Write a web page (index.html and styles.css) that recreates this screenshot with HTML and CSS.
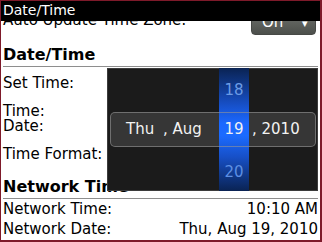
FILE: index.html
```html
<!DOCTYPE html>
<html lang="en">
<head>
    <meta charset="UTF-8">
    <title>Date/Time</title>
    <link rel="stylesheet" href="styles.css">
</head>
<body>
    <div class="screen">
        <div class="list">
            <div class="row-top">
                <span class="label">Auto Update Time Zone:</span>
                <div class="dropdown">On <span class="caret">▾</span></div>
            </div>

            <div class="heading">Date/Time</div>
            <div class="set-time">Set Time:</div>
            <div class="time-date">
                <div>Time:</div>
                <div>Date:</div>
            </div>
            <div class="format">Time Format:</div>

            <div class="heading network">Network Time</div>
            <div class="info-row">
                <span>Network Time:</span>
                <span>10:10 AM</span>
            </div>
            <div class="info-row">
                <span>Network Date:</span>
                <span>Thu, Aug 19, 2010</span>
            </div>
        </div>

        <!-- title bar sits over the scrolled list -->
        <div class="titlebar">Date/Time</div>

        <!-- date picker dialog -->
        <div class="picker">
            <div class="stripe"></div>
            <div class="wheel">
                <div class="num">18</div>
                <div class="pill">
                    <span class="seg-day">Thu</span>
                    <span class="seg-month">, Aug</span>
                    <span class="seg-date">19</span>
                    <span class="seg-year">, 2010</span>
                </div>
                <div class="num num-next">20</div>
            </div>
        </div>
    </div>
</body>
</html>
```

FILE: styles.css
```css
* {
    margin: 0;
    padding: 0;
    box-sizing: border-box;
}

body {
    font-family: "DejaVu Sans", Verdana, sans-serif;
    background: #fff;
}

.screen {
    position: relative;
    width: 322px;
    height: 242px;
    overflow: hidden;
    background: #fff;
    border-style: solid;
    border-color: #7e1a2a;
    border-width: 1px 2px 2px 1px;
    color: #000;
    font-size: 15px;
}

.list {
    padding: 0 2px;
}

.row-top {
    display: flex;
    justify-content: space-between;
    align-items: flex-start;
    height: 34px;
}

.row-top .label {
    margin-top: 9px;
    line-height: 20px;
}

.dropdown {
    margin-top: 13px;
    margin-right: 2px;
    width: 65px;
    height: 21px;
    padding-left: 10px;
    line-height: 14px;
    color: #fff;
    background: linear-gradient(#6b6e69, #4c4f4b);
    border: 1px solid #474946;
    border-radius: 4px;
}

.dropdown .caret {
    margin-left: 14px;
    font-size: 11px;
}

.heading {
    margin-top: 10px;
    line-height: 20px;
    padding-bottom: 1px;
    border-bottom: 1px solid #8e8e8e;
    font-size: 16px;
    font-weight: bold;
}

.heading.network {
    margin-top: 13px;
}

.set-time {
    margin-top: 6px;
    line-height: 20px;
}

.time-date {
    margin-top: 11px;
    line-height: 15px;
}

.format {
    margin-top: 10px;
    line-height: 20px;
}

.info-row {
    display: flex;
    justify-content: space-between;
    line-height: 20px;
}

.titlebar {
    position: absolute;
    top: 0;
    left: 0;
    right: 0;
    height: 20px;
    padding-left: 2px;
    line-height: 18px;
    font-size: 14px;
    color: #fff;
    background: #000;
}

.picker {
    position: absolute;
    left: 106px;
    top: 67px;
    width: 211px;
    height: 123px;
    background: #1b1b1b;
    border: 1px solid #3c3c3c;
}

.stripe {
    position: absolute;
    left: 111px;
    top: -1px;
    bottom: -1px;
    width: 30px;
    background: linear-gradient(#0a2353 0%, #1750c8 30%, #1b68ff 45%, #1b6bff 55%, #1750c8 72%, #0a2353 100%);
}

.wheel {
    position: relative;
    padding-top: 11px;
}

.num {
    width: 141px;
    padding-left: 111px;
    line-height: 20px;
    text-align: center;
    color: #6b9be6;
}

.num-next {
    margin-top: 15px;
    color: #5d8fe4;
}

.pill {
    display: flex;
    margin-top: 12px;
    margin-left: 2px;
    width: 206px;
    height: 35px;
    padding-left: 15px;
    line-height: 33px;
    color: #f2f2f2;
    border: 1px solid rgba(150, 150, 150, 0.6);
    border-radius: 5px;
    background: linear-gradient(to right, #363636 0, #363636 108px, transparent 108px, transparent 138px, #363636 138px);
}

.seg-day {
    width: 37px;
}

.seg-month {
    width: 56px;
}

.seg-date {
    width: 30px;
    text-align: center;
}

.seg-year {
    padding-left: 3px;
}
```
